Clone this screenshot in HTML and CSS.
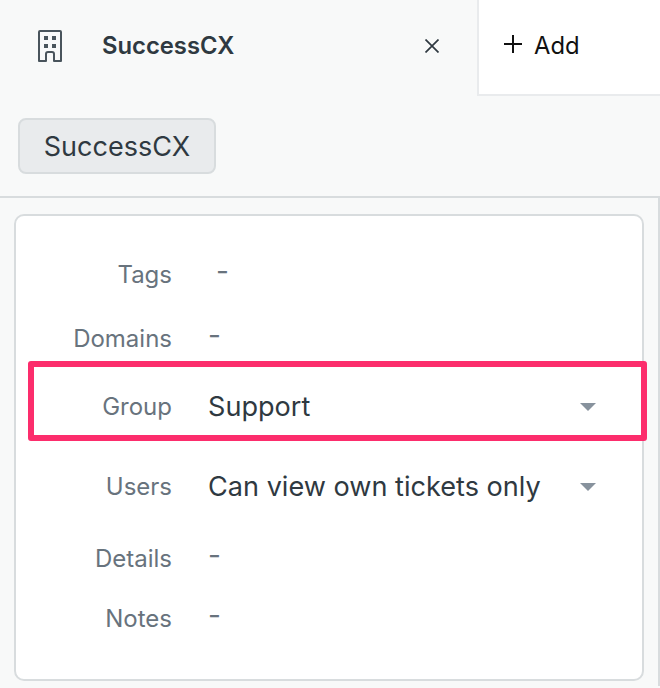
FILE: index.html
```html
<!DOCTYPE html>
<html lang="en">
<head>
<meta charset="utf-8">
<title>SuccessCX</title>
<link rel="stylesheet" href="styles.css">
</head>
<body>
<div class="page">
  <div class="tabs">
    <div class="tab-active">
      <svg class="building" width="24" height="32" viewBox="0 0 24 32" fill="none">
        <path d="M1 31V2a1 1 0 0 1 1-1h20a1 1 0 0 1 1 1v29h-7V24a2 2 0 0 0-2-2h-4a2 2 0 0 0-2 2v7H1Z" stroke="#49545c" stroke-width="2" stroke-linejoin="round"/>
        <rect x="6" y="6" width="4" height="4" fill="#49545c"/>
        <rect x="14" y="6" width="4" height="4" fill="#49545c"/>
        <rect x="6" y="14" width="4" height="4" fill="#49545c"/>
        <rect x="14" y="14" width="4" height="4" fill="#49545c"/>
      </svg>
      <span class="tab-title">SuccessCX</span>
      <svg class="close" width="14" height="14" viewBox="0 0 14 14" fill="none">
        <path d="M0.5 0.5l13 13M13.5 0.5l-13 13" stroke="#2f3941" stroke-width="1.7"/>
      </svg>
    </div>
    <div class="tab-add">
      <svg class="plus" width="18" height="18" viewBox="0 0 18 18" fill="none">
        <path d="M9 0v18M0 9h18" stroke="#111" stroke-width="2"/>
      </svg>
      <span>Add</span>
    </div>
  </div>
  <div class="crumbs"><span class="pill">SuccessCX</span></div>
  <div class="panel">
    <div class="card">
      <div class="row h64"><span class="label">Tags</span><span class="dash dash-tags">-</span></div>
      <div class="row h64"><span class="label">Domains</span><span class="dash">-</span></div>
      <div class="row h72"><span class="label">Group</span><span class="value">Support</span><span class="caret"></span></div>
      <div class="row h88"><span class="label">Users</span><span class="value">Can view own tickets only</span><span class="caret"></span></div>
      <div class="row h56"><span class="label">Details</span><span class="dash">-</span></div>
      <div class="row h64"><span class="label">Notes</span><span class="dash">-</span></div>
    </div>
  </div>
  <div class="highlight"></div>
</div>
</body>
</html>
```
FILE: styles.css
```css
* { box-sizing: border-box; }
html, body { margin: 0; padding: 0; }
body {
  width: 660px;
  height: 688px;
  overflow: hidden;
  background: #f8f9f9;
  font-family: Inter, "Liberation Sans", sans-serif;
  color: #2f3941;
}
.page { position: relative; width: 660px; height: 688px; }
.tabs { display: flex; height: 96px; }
.tab-active {
  width: 477px;
  display: flex;
  align-items: center;
  padding-left: 38px;
  padding-right: 38px;
}
.building { flex: none; margin-top: -4px; }
.tab-title {
  margin-left: 40px;
  font-size: 23.8px;
  font-weight: 600;
  flex: 1;
  margin-top: -6px;
}
.close { flex: none; margin-top: -4px; }
.tab-add {
  flex: 1;
  display: flex;
  align-items: center;
  background: #fff;
  border-left: 2px solid #e9ebed;
  border-bottom: 2px solid #e9ebed;
  padding-left: 25px;
  color: #111;
  font-size: 23.8px;
}
.plus { margin-right: 12px; margin-top: -6px; }
.tab-add span { margin-top: -3px; }
.crumbs {
  height: 102px;
  padding: 22px 0 0 18px;
  margin-right: 2px;
  border-bottom: 2px solid #d8dcde;
}
.pill {
  display: inline-flex;
  align-items: center;
  height: 56px;
  width: 198px;
  justify-content: center;
  background: #e9ebed;
  border: 2px solid #d8dcde;
  border-radius: 8px;
  font-size: 27px;
}
.panel {
  height: 490px;
  padding: 18px 14px 0 14px;
  border-right: 2px solid #d8dcde;
  margin-top: -2px;
}
.card {
  height: 467px;
  background: #fff;
  border: 2px solid #d8dcde;
  border-radius: 10px;
  padding-top: 27px;
}
.row { display: flex; align-items: center; position: relative; }
.h64 { height: 64px; }
.h72 { height: 72px; }
.h88 { height: 88px; }
.h56 { height: 56px; }
.label {
  width: 156px;
  text-align: right;
  font-size: 24px;
  color: #68737d;
  flex: none;
  margin-top: -2px;
}
.value {
  margin-left: 36px;
  font-size: 27.1px;
  flex: 1;
  margin-top: -2px;
}
.dash {
  margin-left: 36px;
  font-size: 28px;
  color: #68737d;
  margin-top: -8px;
}
.dash-tags { margin-left: 44px; }
.caret {
  width: 0;
  height: 0;
  border-left: 8px solid transparent;
  border-right: 8px solid transparent;
  border-top: 8px solid #87929d;
  margin-right: 46px;
  flex: none;
}
.highlight {
  position: absolute;
  left: 28px;
  top: 361px;
  width: 619px;
  height: 80px;
  border: 6px solid #fc2d6c;
  border-radius: 3px;
}
```
